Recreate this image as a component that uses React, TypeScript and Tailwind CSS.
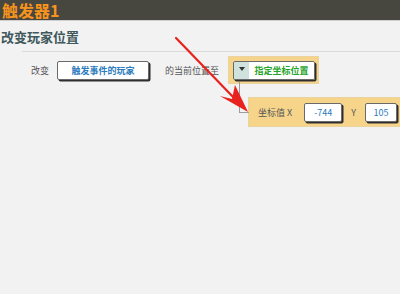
import { ReactNode } from "react";

const font = { fontFamily: '"Noto Sans CJK SC", "Noto Sans", sans-serif' };

function ChipButton({ children, className }: { children: ReactNode; className?: string }) {
  return (
    <div
      className={
        "h-[19px] bg-white border border-[#6a6a6a] rounded-[2px] shadow-[1.5px_1.5px_0_#2e2e2e] flex items-center justify-center text-[9px] font-bold text-[#2b7bbd] leading-none " +
        (className ?? "")
      }
    >
      {children}
    </div>
  );
}

export default function App() {
  return (
    <div className="relative w-[400px] h-[294px] overflow-hidden bg-[#f2f2f2]" style={font}>
      {/* title bar */}
      <div className="h-[21px] bg-[#47463f] border-b border-[#cfcfcf] pl-[2px]">
        <span className="block text-[16px] font-bold text-[#f7941d] leading-[20px]">触发器1</span>
      </div>

      {/* section header */}
      <div className="h-[30px] flex items-center pl-[1px]">
        <span className="text-[13px] font-bold text-[#3f585c] leading-none">改变玩家位置</span>
      </div>
      <div className="ml-[22px] h-px bg-[#dadada]" />

      {/* action row */}
      <div className="mt-[4px] h-[28px] flex items-center">
        <span className="ml-[31px] text-[9px] text-[#555] leading-none whitespace-nowrap">改变</span>
        <ChipButton className="ml-[8px] w-[92px]">触发事件的玩家</ChipButton>
        <span className="ml-[16px] w-[56px] text-[9px] text-[#555] leading-none whitespace-nowrap">
          的当前位置至
        </span>
        <div className="ml-[7px] w-[91px] h-[28px] bg-[#f6d58b] border border-[#ead39f] flex items-center pl-[4px]">
          <div className="w-[82px] h-[19px] flex border border-[#6a6a6a] rounded-[2px] shadow-[1.5px_1.5px_0_#2e2e2e] overflow-hidden">
            <div className="w-[15px] bg-[#cfe2dd] flex items-start justify-center pt-[5px]">
              <svg width="6" height="4" viewBox="0 0 6 4">
                <path d="M0 0 H6 L3 4 Z" fill="#333" />
              </svg>
            </div>
            <div className="flex-1 bg-white flex items-center justify-center text-[9px] font-bold text-[#27a32b] leading-none">
              指定坐标位置
            </div>
          </div>
        </div>
      </div>

      {/* coordinate row */}
      <div className="mt-[13px] ml-[248px] w-[160px] h-[30px] bg-[#f6d58b] border border-[#ead39f] flex items-center">
        <span className="ml-[9px] text-[9px] text-[#555] leading-none whitespace-nowrap">坐标值 X</span>
        <ChipButton className="ml-[12px] w-[38px] font-normal">-744</ChipButton>
        <span className="ml-[9px] text-[9px] text-[#555] leading-none">Y</span>
        <ChipButton className="ml-[9px] w-[32px] font-normal">105</ChipButton>
      </div>

      {/* tree connector */}
      <div className="absolute left-[239px] top-[82px] w-[10px] h-[31px] border-l border-b border-[#9c9c9c]" />

      {/* red annotation arrow */}
      <svg className="absolute left-0 top-0 pointer-events-none" width="400" height="294">
        <line x1="176" y1="38" x2="236" y2="100" stroke="#e8221c" strokeWidth="2.2" strokeLinecap="round" />
        <path d="M248 112 L220 96 L232 99 L235 85 Z" fill="#e8221c" />
      </svg>
    </div>
  );
}
